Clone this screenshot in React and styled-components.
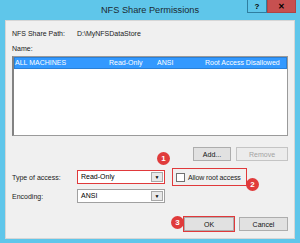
import React from "react";
import styled, { createGlobalStyle } from "styled-components";

const GlobalStyle = createGlobalStyle`
    html, body {
        margin: 0;
        padding: 0;
    }
    body {
        width: 300px;
        height: 243px;
        overflow: hidden;
        font-family: "Liberation Sans", Arial, sans-serif;
    }
`;

const Window = styled.div`
    width: 300px;
    height: 243px;
    background-color: #5fc6ea;
    display: flex;
    flex-direction: column;
    box-sizing: border-box;
`;

const TitleBar = styled.div`
    height: 20px;
    display: grid;
    grid-template-columns: 1fr auto 1fr;
    align-items: start;
`;

const Title = styled.div`
    grid-column: 2;
    font-size: 9.2px;
    line-height: 20px;
    color: #1b2a33;
`;

const Controls = styled.div`
    grid-column: 3;
    justify-self: end;
    display: flex;
    margin-right: 4px;
`;

const ControlButton = styled.div`
    width: ${p => p.$w}px;
    height: 13px;
    box-sizing: border-box;
    display: flex;
    align-items: center;
    justify-content: center;
    font-size: 8px;
    font-weight: bold;
    color: #000;
    background-color: ${p => p.$bg};
    border: 1px solid ${p => p.$border};
    border-top: none;
`;

const Client = styled.div`
    margin: 0 5px;
    height: 219px;
    box-sizing: border-box;
    background-color: #f0f0f0;
    border: 1px solid #d6d6d6;
    padding: 8px 6px 0 6px;
    display: flex;
    flex-direction: column;
    font-size: 7px;
    color: #1a1a1a;
`;

const InfoRow = styled.div`
    display: flex;
    height: 10px;
    line-height: 10px;
    margin-bottom: ${p => p.$mb || 0}px;
`;

const InfoLabel = styled.span`
    width: 65px;
`;

const ListBox = styled.div`
    height: 80px;
    background: #fff;
    border: 1px solid #9a9a9a;
    border-left: 2px solid #828282;
    box-sizing: border-box;
    margin-top: 2px;
`;

const ListRow = styled.div`
    display: grid;
    grid-template-columns: 94px 48px 48px 1fr;
    height: 10px;
    line-height: 10px;
    background-color: ${p => (p.$selected ? "#3399ff" : "transparent")};
    color: ${p => (p.$selected ? "#fff" : "#000")};
    border: 1px solid ${p => (p.$selected ? "#2a7fd6" : "transparent")};
    white-space: nowrap;
`;

const ButtonRow = styled.div`
    display: flex;
    justify-content: flex-end;
    gap: ${p => p.$gap || 5}px;
    margin-top: ${p => p.$mt}px;
    position: relative;
`;

const Button = styled.div`
    width: ${p => p.$w}px;
    height: 14px;
    box-sizing: border-box;
    display: flex;
    align-items: center;
    justify-content: center;
    background-color: ${p => (p.$disabled ? "#ececec" : "#e1e1e1")};
    border: 1px solid ${p => (p.$disabled ? "#c4c4c4" : "#adadad")};
    color: ${p => (p.$disabled ? "#a3a3a3" : "#111")};
    outline: ${p => (p.$marked ? "1.5px solid #e0393b" : "none")};
    outline-offset: 0;
    position: relative;
`;

const FormRow = styled.div`
    display: flex;
    align-items: center;
    margin-top: ${p => p.$mt}px;
    height: ${p => p.$h || 14}px;
`;

const FormLabel = styled.span`
    width: 65px;
`;

const Combo = styled.div`
    width: 88px;
    height: 14px;
    box-sizing: border-box;
    background: #fff;
    border: ${p => (p.$marked ? "1.5px solid #e0393b" : "1px solid #a0a0a0")};
    display: flex;
    align-items: stretch;
    position: relative;
`;

const ComboText = styled.span`
    flex: 1;
    padding-left: 3px;
    line-height: 11px;
    color: #000;
`;

const ComboArrow = styled.span`
    width: 10px;
    margin: 1px;
    background: #e8e8e8;
    border: 1px solid #a8a8a8;
    display: flex;
    align-items: center;
    justify-content: center;
    font-size: 5px;
    color: #000;
`;

const CheckFrame = styled.div`
    margin-left: 7px;
    width: 75px;
    height: 18px;
    box-sizing: border-box;
    border: 1.5px solid #e0393b;
    display: flex;
    align-items: center;
    gap: 3px;
    padding-left: 3px;
    position: relative;
    white-space: nowrap;
    letter-spacing: -0.1px;
`;

const CheckBox = styled.span`
    flex: none;
    width: 7px;
    height: 7px;
    background: #fff;
    border: 1px solid #707070;
`;

const Badge = styled.span`
    position: absolute;
    width: 13px;
    height: 13px;
    border-radius: 50%;
    background-color: #e03b3b;
    color: #fff;
    font-size: 8px;
    font-weight: bold;
    letter-spacing: 0;
    display: flex;
    align-items: center;
    justify-content: center;
    left: ${p => p.$x}px;
    top: ${p => p.$y}px;
`;

const App = () => {
    return (
        <Window>
            <GlobalStyle />
            <TitleBar>
                <Title>NFS Share Permissions</Title>
                <Controls>
                    <ControlButton $w={20} $bg="#5fc6ea" $border="#2f7ea0">?</ControlButton>
                    <ControlButton $w={29} $bg="#c75050" $border="#b04444">✕</ControlButton>
                </Controls>
            </TitleBar>
            <Client>
                <InfoRow $mb={5}>
                    <InfoLabel>NFS Share Path:</InfoLabel>
                    <span>D:\MyNFSDataStore</span>
                </InfoRow>
                <InfoRow>Name:</InfoRow>
                <ListBox>
                    <ListRow $selected>
                        <span>ALL MACHINES</span>
                        <span>Read-Only</span>
                        <span>ANSI</span>
                        <span>Root Access Disallowed</span>
                    </ListRow>
                </ListBox>
                <ButtonRow $mt={11}>
                    <Button $w={38}>Add...</Button>
                    <Button $w={52} $disabled>Remove</Button>
                </ButtonRow>
                <FormRow $mt={7} $h={18}>
                    <FormLabel>Type of access:</FormLabel>
                    <Combo $marked>
                        <ComboText>Read-Only</ComboText>
                        <ComboArrow>▼</ComboArrow>
                        <Badge $x={79} $y={-19}>1</Badge>
                    </Combo>
                    <CheckFrame>
                        <CheckBox />
                        <span>Allow root access</span>
                        <Badge $x={73} $y={9}>2</Badge>
                    </CheckFrame>
                </FormRow>
                <FormRow $mt={3}>
                    <FormLabel>Encoding:</FormLabel>
                    <Combo>
                        <ComboText>ANSI</ComboText>
                        <ComboArrow>▼</ComboArrow>
                    </Combo>
                </FormRow>
                <ButtonRow $mt={14}>
                    <Button $w={50} $marked>
                        OK
                        <Badge $x={-14} $y={-2}>3</Badge>
                    </Button>
                    <Button $w={49}>Cancel</Button>
                </ButtonRow>
            </Client>
        </Window>
    );
};

export default App;
